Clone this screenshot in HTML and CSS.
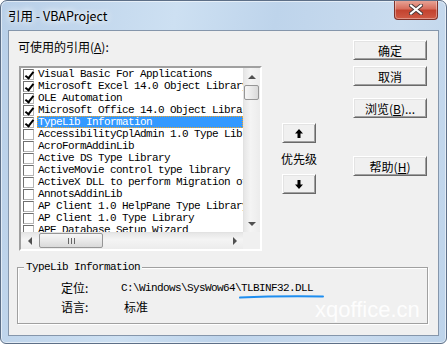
FILE: index.html
```html
<!DOCTYPE html>
<html lang="zh-CN">
<head>
    <meta charset="UTF-8">
    <title>引用 - VBAProject</title>
    <link rel="stylesheet" href="styles.css">
</head>
<body>
    <div class="window">
        <div class="titlebar">
            <span class="title">引用 - VBAProject</span>
            <button class="close-btn">
                <svg width="14" height="11" viewBox="0 0 14 11">
                    <path d="M2 1.5 L12 9.5 M12 1.5 L2 9.5" stroke="#4a3a3a" stroke-width="4" stroke-linecap="square"/>
                    <path d="M2 1.5 L12 9.5 M12 1.5 L2 9.5" stroke="#fff" stroke-width="2" stroke-linecap="square"/>
                </svg>
            </button>
        </div>

        <div class="client">
            <div class="main">
                <div class="refs">
                    <div class="refs-label">可使用的引用(<u>A</u>):</div>
                    <div class="listbox">
                        <div class="list-rows">
                            <div class="row"><span class="check on"></span><span class="name">Visual Basic For Applications</span></div>
                            <div class="row"><span class="check on"></span><span class="name">Microsoft Excel 14.0 Object Library</span></div>
                            <div class="row"><span class="check on"></span><span class="name">OLE Automation</span></div>
                            <div class="row"><span class="check on"></span><span class="name">Microsoft Office 14.0 Object Library</span></div>
                            <div class="row sel"><span class="check on"></span><span class="name">TypeLib Information</span></div>
                            <div class="row"><span class="check"></span><span class="name">AccessibilityCplAdmin 1.0 Type Library</span></div>
                            <div class="row"><span class="check"></span><span class="name">AcroFormAddinLib</span></div>
                            <div class="row"><span class="check"></span><span class="name">Active DS Type Library</span></div>
                            <div class="row"><span class="check"></span><span class="name">ActiveMovie control type library</span></div>
                            <div class="row"><span class="check"></span><span class="name">ActiveX DLL to perform Migration of MS Repository</span></div>
                            <div class="row"><span class="check"></span><span class="name">AnnotsAddinLib</span></div>
                            <div class="row"><span class="check"></span><span class="name">AP Client 1.0 HelpPane Type Library</span></div>
                            <div class="row"><span class="check"></span><span class="name">AP Client 1.0 Type Library</span></div>
                            <div class="row"><span class="check"></span><span class="name">APE Database Setup Wizard</span></div>
                        </div>
                        <div class="vscroll">
                            <div class="sb-arrow"><span class="tri up"></span></div>
                            <div class="thumb-v"></div>
                            <div class="sb-track"></div>
                            <div class="sb-arrow"><span class="tri down"></span></div>
                        </div>
                        <div class="hscroll">
                            <div class="sb-arrow"><span class="tri left"></span></div>
                            <div class="thumb-h"><span class="grip"></span></div>
                            <div class="sb-track"></div>
                            <div class="sb-arrow"><span class="tri right"></span></div>
                        </div>
                        <div class="corner"></div>
                    </div>
                </div>

                <div class="priority">
                    <button class="btn arrow-btn">
                        <svg width="8" height="9" viewBox="0 0 8 9"><path d="M4 0 L8 4.5 L5.5 4.5 L5.5 9 L2.5 9 L2.5 4.5 L0 4.5 Z" fill="#000"/></svg>
                    </button>
                    <div class="priority-label">优先级</div>
                    <button class="btn arrow-btn down-btn">
                        <svg width="8" height="9" viewBox="0 0 8 9"><path d="M4 9 L8 4.5 L5.5 4.5 L5.5 0 L2.5 0 L2.5 4.5 L0 4.5 Z" fill="#000"/></svg>
                    </button>
                </div>

                <div class="actions">
                    <button class="btn">确定</button>
                    <button class="btn cancel-btn">取消</button>
                    <button class="btn browse-btn">浏览(<u>B</u>)...</button>
                    <button class="btn help-btn">帮助(<u>H</u>)</button>
                </div>
            </div>

            <fieldset class="info">
                <legend>TypeLib Information</legend>
                <div class="info-grid">
                    <span>定位:</span><span class="mono">C:\Windows\SysWow64\TLBINF32.DLL</span>
                    <span>语言:</span><span class="lang">标准</span>
                </div>
            </fieldset>

            <svg class="mark-line" width="88" height="6" viewBox="0 0 88 6">
                <path d="M2 3.6 Q40 1.6 85 2.4" stroke="#1e8ef0" stroke-width="2" fill="none" stroke-linecap="round"/>
            </svg>
            <div class="watermark">xqoffice.cn</div>
        </div>
    </div>
</body>
</html>
```

FILE: styles.css
```css
* {
    box-sizing: border-box;
}
body {
    margin: 0;
    background: #fff;
    font-family: "Noto Sans CJK SC", sans-serif;
    font-size: 12px;
    color: #000;
}
button {
    font-family: inherit;
    font-size: 12px;
    color: #000;
    padding: 0;
}
.window {
    width: 447px;
    height: 344px;
    border: 1px solid #5d6f87;
    border-radius: 7px 7px 6px 6px;
    background: linear-gradient(100deg, #b8cfe8 0%, #cde0f2 35%, #bed4eb 55%, #cadcef 80%, #bdd3ea 100%);
    box-shadow: inset 0 0 0 1px rgba(255, 255, 255, 0.55);
    display: flex;
    flex-direction: column;
    overflow: hidden;
}
.titlebar {
    height: 29px;
    flex: none;
    display: flex;
    justify-content: space-between;
    align-items: flex-start;
    padding-left: 7px;
}
.title {
    line-height: 29px;
    font-size: 12.5px;
    text-shadow: 0 0 6px #fff, 0 0 10px #fff;
}
.close-btn {
    width: 44px;
    height: 20px;
    margin-top: -1px;
    margin-right: 8px;
    border: 1px solid #7e322a;
    border-top: none;
    border-radius: 0 0 4px 4px;
    background: linear-gradient(to bottom, #e9a99c 0%, #d8705f 45%, #c3432f 55%, #cf5a45 100%);
    box-shadow: inset 0 0 0 1px rgba(255, 255, 255, 0.35);
    display: flex;
    align-items: center;
    justify-content: center;
}
.client {
    flex: 1;
    margin: 0 7px 7px;
    border: 1px solid #8596ab;
    background: #f0f0f0;
    padding-left: 9px;
    position: relative;
}
.main {
    display: flex;
    align-items: flex-start;
}
.refs {
    margin-top: 8px;
}
.refs-label {
    line-height: 16px;
}
.listbox {
    width: 243px;
    height: 185px;
    margin: 11px 0 0 1px;
    border: 2px solid;
    border-color: #a0a0a0 #ffffff #ffffff #a0a0a0;
    box-shadow: inset 1px 1px 0 #696969, inset -1px -1px 0 #e3e3e3;
    display: grid;
    grid-template-columns: 222px 17px;
    grid-template-rows: 164px 17px;
    background: #fff;
}
.list-rows {
    overflow: hidden;
    white-space: nowrap;
    background: #fff;
}
.row {
    height: 12px;
    display: flex;
    align-items: center;
    padding-left: 2px;
}
.check {
    flex: none;
    width: 11px;
    height: 11px;
    border: 1px solid;
    border-color: #6f6f6f #b5b5b5 #b5b5b5 #6f6f6f;
    background: #fff;
    position: relative;
    margin-right: 3px;
}
.check.on::after {
    content: "";
    position: absolute;
    left: 3px;
    top: 0;
    width: 3px;
    height: 7px;
    border: solid #000;
    border-width: 0 2px 2px 0;
    transform: rotate(38deg);
}
.name {
    flex: 1;
    font-family: "Liberation Mono", monospace;
    font-size: 11px;
    letter-spacing: -0.6px;
    line-height: 12px;
    height: 12px;
    padding-left: 1px;
    overflow: hidden;
}
.row.sel .name {
    background: #3399ff;
    color: #fff;
    outline: 1px dotted #f5a623;
    outline-offset: -1px;
}
.vscroll {
    display: flex;
    flex-direction: column;
    background: linear-gradient(to right, #e6e6e6, #f4f4f4 40%, #ececec);
    border-left: 1px solid #e2e2e2;
}
.hscroll {
    display: flex;
    background: linear-gradient(to bottom, #e6e6e6, #f4f4f4 40%, #ececec);
    border-top: 1px solid #e2e2e2;
}
.corner {
    background: #f0f0f0;
}
.sb-arrow {
    flex: none;
    width: 16px;
    height: 17px;
    display: flex;
    align-items: center;
    justify-content: center;
}
.hscroll .sb-arrow {
    width: 17px;
    height: 16px;
}
.sb-track {
    flex: 1;
}
.tri {
    width: 0;
    height: 0;
    border: 4px solid transparent;
}
.tri.up {
    border-bottom: 4px solid #505050;
    border-top-width: 0;
}
.tri.down {
    border-top: 4px solid #505050;
    border-bottom-width: 0;
}
.tri.left {
    border-right: 4px solid #505050;
    border-left-width: 0;
}
.tri.right {
    border-left: 4px solid #505050;
    border-right-width: 0;
}
.thumb-v {
    flex: none;
    height: 15px;
    margin: 0 1px 0 0;
    border: 1px solid #969696;
    border-radius: 2px;
    background: linear-gradient(to right, #f6f6f6, #e9e9e9 50%, #d9d9d9);
}
.thumb-h {
    flex: none;
    width: 64px;
    margin: 0 0 1px 1px;
    border: 1px solid #969696;
    border-radius: 2px;
    background: linear-gradient(to bottom, #f6f6f6, #e9e9e9 50%, #d9d9d9);
    display: flex;
    align-items: center;
    justify-content: center;
}
.grip {
    width: 7px;
    height: 6px;
    background: repeating-linear-gradient(to right, #666 0 1px, transparent 1px 3px);
}
.btn {
    display: flex;
    align-items: center;
    justify-content: center;
    background: #f0f0f0;
    border: 1px solid;
    border-color: #ffffff #696969 #696969 #ffffff;
    box-shadow: inset 1px 1px 0 #e3e3e3, inset -1px -1px 0 #a0a0a0;
}
.priority {
    margin: 92px 0 0 20px;
    width: 34px;
    display: flex;
    flex-direction: column;
    align-items: center;
}
.arrow-btn {
    width: 34px;
    height: 20px;
}
.priority-label {
    margin-top: 8px;
    line-height: 16px;
    white-space: nowrap;
}
.down-btn {
    margin-top: 7px;
}
.actions {
    margin: 9px 0 0 37px;
    display: flex;
    flex-direction: column;
}
.actions .btn {
    width: 74px;
    height: 20px;
}
.actions .cancel-btn {
    margin-top: 6px;
}
.actions .browse-btn {
    margin-top: 12px;
}
.actions .help-btn {
    margin-top: 38px;
}
.info {
    width: 411px;
    min-inline-size: 0;
    margin: 10px 0 0 -1px;
    padding: 0;
    border: 1px solid #a0a0a0;
    box-shadow: 1px 1px 0 #fff, inset 1px 1px 0 #fff;
}
.info legend {
    margin-left: 6px;
    padding: 0 2px;
    background: #f0f0f0;
    font-family: "Liberation Mono", monospace;
    font-size: 11px;
    letter-spacing: -0.6px;
    line-height: 12px;
}
.info-grid {
    display: grid;
    grid-template-columns: 60px auto;
    grid-auto-rows: 19px;
    align-items: center;
    padding: 5px 0 7px 43px;
}
.mono {
    font-family: "Liberation Mono", monospace;
    font-size: 11px;
    letter-spacing: -0.6px;
}
.lang {
    padding-left: 3px;
}
.mark-line {
    position: absolute;
    left: 229px;
    top: 263px;
}
.watermark {
    position: absolute;
    left: 306px;
    top: 267px;
    font-family: "Liberation Sans", Arial, sans-serif;
    font-size: 22px;
    line-height: 24px;
    color: rgba(255, 255, 255, 0.9);
}
```
